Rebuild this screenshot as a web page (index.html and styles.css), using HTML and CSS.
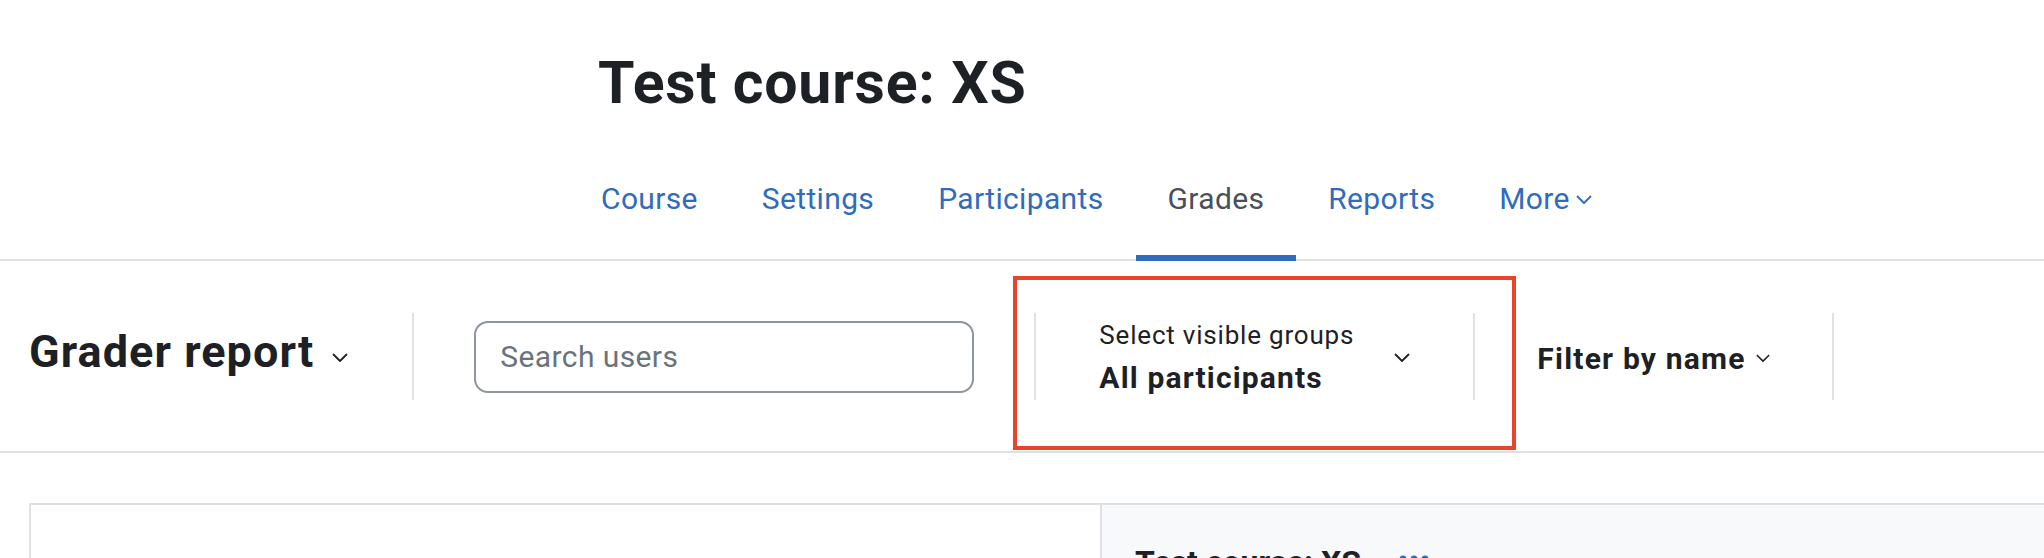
FILE: index.html
```html
<!DOCTYPE html>
<html>
<head>
	<title>Grader report</title>
	<link rel="stylesheet" href="styles.css">
</head>
<body>
	<div class="page-header">
		<h1 class="course-title">Test course: XS</h1>
		<div class="secondary-navigation">
			<ul class="nav-tabs">
				<li><a class="nav-link">Course</a></li>
				<li><a class="nav-link">Settings</a></li>
				<li><a class="nav-link">Participants</a></li>
				<li><a class="nav-link active">Grades</a></li>
				<li><a class="nav-link">Reports</a></li>
				<li>
					<a class="nav-link">More
						<svg class="caret caret-more" viewBox="0 0 16 10"><path d="M1.5 1.5l6.5 6.5 6.5-6.5"/></svg>
					</a>
				</li>
			</ul>
		</div>
	</div>

	<div class="tertiary-nav">
		<div class="report-selector">
			<h2>Grader report</h2>
			<svg class="caret" viewBox="0 0 16 10"><path d="M1.5 1.5l6.5 6.5 6.5-6.5"/></svg>
		</div>
		<span class="divider"></span>
		<input class="search-input" type="text" placeholder="Search users">
		<span class="divider"></span>
		<div class="group-selector">
			<div class="group-text">
				<span class="group-label">Select visible groups</span>
				<span class="group-value">All participants</span>
			</div>
			<svg class="caret" viewBox="0 0 16 10"><path d="M1.5 1.5l6.5 6.5 6.5-6.5"/></svg>
		</div>
		<span class="divider"></span>
		<div class="name-filter">
			Filter by name
			<svg class="caret caret-small" viewBox="0 0 16 10"><path d="M1.5 1.5l6.5 6.5 6.5-6.5"/></svg>
		</div>
		<span class="divider"></span>

		<!-- annotation box drawn over the groups selector -->
		<div class="highlight"></div>
	</div>

	<div class="report-area">
		<div class="grader-table">
			<div class="cell-blank"></div>
			<div class="cell-course">
				<span class="course-name">Test course: XS</span>
				<svg class="dots" viewBox="0 0 30 8">
					<circle cx="4" cy="4" r="3.5"/>
					<circle cx="15" cy="4" r="3.5"/>
					<circle cx="26" cy="4" r="3.5"/>
				</svg>
			</div>
		</div>
	</div>
</body>
</html>
```

FILE: styles.css
```css
body {
	margin: 0;
	padding: 0;
	background-color: #ffffff;
	color: #1d2125;
	font-family: Roboto, "Liberation Sans", sans-serif;
	overflow: hidden;
}

/* header with course title and secondary tabs */
.page-header {
	padding-top: 47px;
}

.course-title {
	margin: 0 0 22px 598px;
	font-size: 59px;
	line-height: 72px;
	font-weight: 700;
	letter-spacing: 0.8px;
}

.secondary-navigation {
	border-bottom: 2px solid #dee2e6;
}

.nav-tabs {
	display: flex;
	list-style: none;
	margin: 0 0 -2px 569px;
	padding: 0;
}

.nav-link {
	display: flex;
	align-items: center;
	height: 114px;
	padding: 0 32px;
	border-bottom: 6px solid transparent;
	color: #306bbd;
	font-size: 30px;
	line-height: 45px;
	letter-spacing: 0.35px;
	cursor: pointer;
}

.nav-link.active {
	color: #495057;
	border-bottom-color: #306bbd;
}

.caret {
	width: 16px;
	height: 10px;
	fill: none;
	stroke: currentColor;
	stroke-width: 1.8;
	stroke-linecap: round;
	stroke-linejoin: round;
}

.caret-more {
	margin-left: 6px;
	margin-top: 4px;
}

/* tertiary navigation bar */
.tertiary-nav {
	position: relative;
	display: flex;
	align-items: center;
	padding: 52px 29px 51px 29px;
	border-bottom: 2px solid #dee2e6;
}

.divider {
	width: 2px;
	height: 87px;
	margin: 0 60px;
	background-color: #dee2e6;
}

.report-selector {
	display: flex;
	align-items: center;
	gap: 18px;
	padding-right: 4px;
}

.report-selector h2 {
	margin: 0 0 10px 0;
	font-size: 45px;
	line-height: 54px;
	font-weight: 700;
	letter-spacing: 1.05px;
}

.report-selector .caret {
	margin-top: 2px;
}

.search-input {
	box-sizing: border-box;
	width: 500px;
	height: 72px;
	padding: 0 24px;
	border: 2px solid #8f959e;
	border-radius: 14px;
	font-family: Roboto, "Liberation Sans", sans-serif;
	font-size: 30px;
	letter-spacing: 0.4px;
	color: #1d2125;
}

.search-input::placeholder {
	color: #6a737b;
}

.group-selector {
	display: flex;
	align-items: center;
	justify-content: space-between;
	box-sizing: border-box;
	width: 317px;
	padding: 0 3px 0 3px;
}

.group-text {
	display: flex;
	flex-direction: column;
	margin-top: 2px;
}

.group-label {
	font-size: 26px;
	line-height: 39px;
	letter-spacing: 0.8px;
}

.group-value {
	font-size: 30px;
	line-height: 45px;
	font-weight: 700;
	letter-spacing: 1.15px;
}

.group-selector .caret {
	margin-top: 2px;
}

.name-filter {
	display: flex;
	align-items: center;
	gap: 10px;
	padding: 4px 2px 0 2px;
	font-size: 30px;
	line-height: 45px;
	font-weight: 700;
	letter-spacing: 1.2px;
}

.caret-small {
	width: 14px;
	height: 9px;
}

.highlight {
	position: absolute;
	left: 1013px;
	top: 15px;
	width: 503px;
	height: 174px;
	box-sizing: border-box;
	border: 4px solid #e9442b;
}

/* report table */
.report-area {
	padding: 50px 0 0 29px;
}

.grader-table {
	display: flex;
	height: 200px;
	border-top: 2px solid #dee2e6;
	border-left: 2px solid #dee2e6;
}

.cell-blank {
	width: 1069px;
	background-color: #ffffff;
}

.cell-course {
	flex: 1;
	display: flex;
	align-items: flex-start;
	padding: 33px 33px;
	border-left: 2px solid #dee2e6;
	background-color: #f8f9fa;
}

.course-name {
	font-size: 32px;
	line-height: 48px;
	font-weight: 700;
}

.dots {
	width: 30px;
	height: 8px;
	margin: 17px 0 0 38px;
	fill: #306bbd;
}
```
